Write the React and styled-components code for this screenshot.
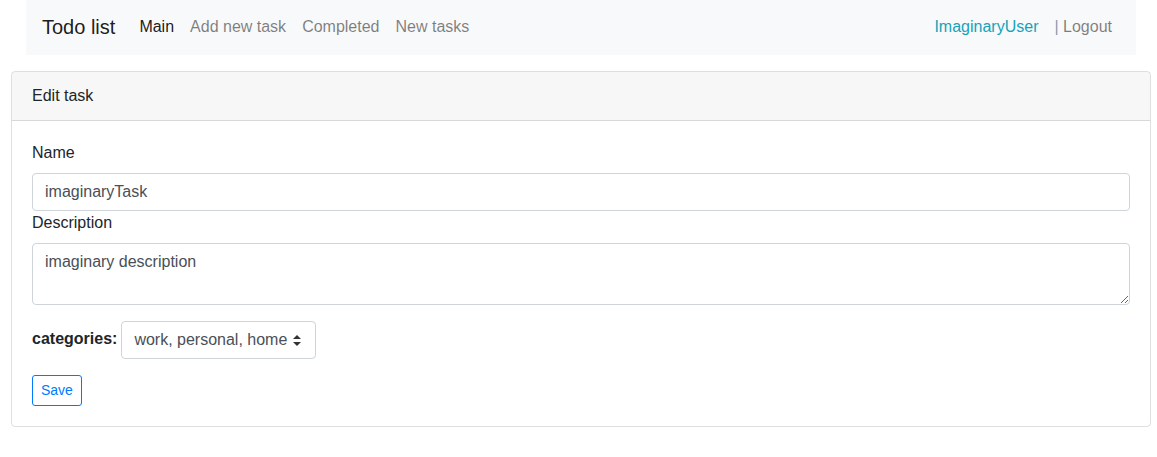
import React from "react";
import styled, { createGlobalStyle } from "styled-components";

const GlobalStyle = createGlobalStyle`
  *, *::before, *::after { box-sizing: border-box; }
  body {
    margin: 0;
    background: #fff;
    font-family: "Liberation Sans", Arial, sans-serif;
    font-size: 16px;
    line-height: 1.5;
    color: #212529;
  }
`;

const Page = styled.div`
  padding: 0 6px 0 11px;
`;

const Navbar = styled.nav`
  display: flex;
  align-items: center;
  justify-content: space-between;
  margin: 0 15px;
  height: 55px;
  padding: 0 16px 1px;
  background: #f8f9fa;
`;

const NavGroup = styled.div`
  display: flex;
  align-items: center;
`;

const Brand = styled.span`
  font-size: 20px;
  line-height: 30px;
  color: rgba(0, 0, 0, 0.9);
  margin-right: 16px;
`;

const NavLink = styled.a`
  padding: 8px;
  font-size: 16px;
  line-height: 24px;
  text-decoration: none;
  cursor: pointer;
  color: ${(p) =>
    p.$active ? "rgba(0, 0, 0, 0.9)" : p.$user ? "#17a2b8" : "rgba(0, 0, 0, 0.5)"};
`;

const Pipe = styled.span`
  color: #8a9aab;
`;

const Card = styled.section`
  margin-top: 16px;
  border: 1px solid rgba(0, 0, 0, 0.125);
  border-radius: 4px;
  overflow: hidden;
`;

const CardHeader = styled.header`
  padding: 12px 20px;
  background: rgba(0, 0, 0, 0.03);
  border-bottom: 1px solid rgba(0, 0, 0, 0.125);
  line-height: 24px;
`;

const CardBody = styled.div`
  padding: 20px;
  display: flex;
  flex-direction: column;
  align-items: stretch;
`;

const Label = styled.label`
  display: block;
  margin-bottom: 8px;
  line-height: 24px;
`;

const TextInput = styled.input`
  display: block;
  width: 100%;
  height: 38px;
  padding: 6px 12px;
  font: inherit;
  color: #495057;
  background: #fff;
  border: 1px solid #ced4da;
  border-radius: 4px;
  outline: none;
`;

const TextArea = styled.textarea`
  display: block;
  width: 100%;
  height: 62px;
  padding: 6px 12px;
  font: inherit;
  line-height: 24px;
  color: #495057;
  background: #fff;
  border: 1px solid #ced4da;
  border-radius: 4px;
  outline: none;
`;

const CategoryRow = styled.div`
  display: flex;
  align-items: center;
  gap: 4px;
  margin-top: 16px;
`;

const BoldLabel = styled.label`
  font-weight: 700;
  line-height: 24px;
  margin-top: -2px;
`;

const SelectWrap = styled.div`
  position: relative;
  display: inline-flex;
`;

const Select = styled.select`
  appearance: none;
  height: 38px;
  width: 195px;
  padding: 6px 28px 6px 12px;
  font: inherit;
  color: #495057;
  background: #fff;
  border: 1px solid #ced4da;
  border-radius: 4px;
  outline: none;
`;

const Arrows = styled.svg`
  position: absolute;
  right: 15px;
  top: 14px;
  pointer-events: none;
`;

const SaveButton = styled.button`
  align-self: flex-start;
  margin-top: 16px;
  padding: 4px 8px;
  font-family: inherit;
  font-size: 14px;
  line-height: 21px;
  color: #007bff;
  background: transparent;
  border: 1px solid #007bff;
  border-radius: 3px;
  cursor: pointer;
`;

export default function App() {
  return (
    <>
      <GlobalStyle />
      <Page>
        <Navbar>
          <NavGroup>
            <Brand>Todo list</Brand>
            <NavLink $active>Main</NavLink>
            <NavLink>Add new task</NavLink>
            <NavLink>Completed</NavLink>
            <NavLink>New tasks</NavLink>
          </NavGroup>
          <NavGroup>
            <NavLink $user>ImaginaryUser</NavLink>
            <NavLink>
              <Pipe>|</Pipe> Logout
            </NavLink>
          </NavGroup>
        </Navbar>
        <Card>
          <CardHeader>Edit task</CardHeader>
          <CardBody>
            <Label htmlFor="name">Name</Label>
            <TextInput id="name" readOnly defaultValue="imaginaryTask" />
            <Label htmlFor="desc">Description</Label>
            <TextArea id="desc" readOnly defaultValue="imaginary description" />
            <CategoryRow>
              <BoldLabel htmlFor="cats">categories:</BoldLabel>
              <SelectWrap>
                <Select id="cats" defaultValue="all">
                  <option value="all">work, personal, home</option>
                </Select>
                <Arrows width="8" height="11" viewBox="0 0 8 11">
                  <path d="M4 0 L8 4 L0 4 Z M0 7 L8 7 L4 11 Z" fill="#333" />
                </Arrows>
              </SelectWrap>
            </CategoryRow>
            <SaveButton>Save</SaveButton>
          </CardBody>
        </Card>
      </Page>
    </>
  );
}
